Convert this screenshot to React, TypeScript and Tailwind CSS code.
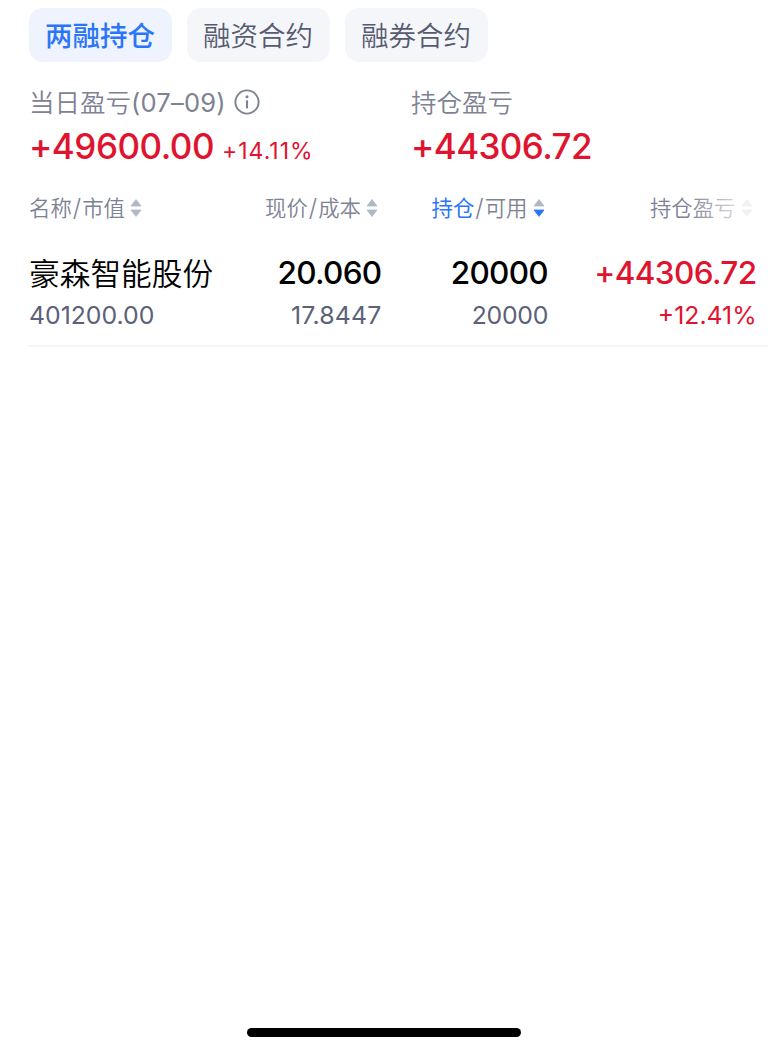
type Tone = "blue" | "gray";

const tabs = [
  { label: "两融持仓", active: true },
  { label: "融资合约", active: false },
  { label: "融券合约", active: false },
];

function SortIcon({ down = "gray" }: { down?: Tone }) {
  return (
    <svg width="12" height="18" viewBox="0 0 12 18" className="shrink-0">
      <path d="M6 0.6 11 7H1Z" fill="#b0b7c5" stroke="#b0b7c5" strokeWidth="0.8" strokeLinejoin="round" />
      <path
        d="M6 17.4 1 11H11Z"
        fill={down === "blue" ? "#2a76f7" : "#b0b7c5"}
        stroke={down === "blue" ? "#2a76f7" : "#b0b7c5"}
        strokeWidth="0.8"
        strokeLinejoin="round"
      />
    </svg>
  );
}

function InfoIcon() {
  return (
    <svg width="26" height="26" viewBox="0 0 26 26" fill="none" className="shrink-0">
      <circle cx="13" cy="13" r="11.6" stroke="#7d8294" strokeWidth="1.9" />
      <circle cx="13" cy="7.8" r="1.5" fill="#7d8294" />
      <path d="M13 11.3V19.4" stroke="#7d8294" strokeWidth="2.1" />
    </svg>
  );
}

function Slash() {
  return <span className="mx-px text-[24px] leading-none">/</span>;
}

export default function App() {
  return (
    <main className="flex h-[1053px] w-[768px] flex-col overflow-hidden whitespace-nowrap bg-white font-['Inter','Noto_Sans_CJK_SC',sans-serif]">
      <nav className="flex gap-[15px] pl-[29px] pt-2">
        {tabs.map((tab) => (
          <button
            key={tab.label}
            type="button"
            className={`flex h-[54px] w-[143px] items-center justify-center rounded-[14px] pr-px pt-1 text-[27.5px] leading-none ${
              tab.active ? "bg-[#eef3fe] font-medium text-[#2a76f7]" : "bg-[#f5f6fa] font-[350] text-[#555b70]"
            }`}
          >
            {tab.label}
          </button>
        ))}
      </nav>

      <section className="flex pl-[29px] pt-[25px]">
        <div className="w-[382px]">
          <div className="flex h-[30px] items-center gap-[8px] text-[25.5px] leading-[30px] text-[#7d8294]">
            <span className="pt-0.5 font-[350]">
              当日盈亏<span className="font-normal tracking-[0.2px]">(07–09)</span>
            </span>
            <InfoIcon />
          </div>
          <div className="flex h-[58px] items-baseline gap-[8px] text-[#df142f]">
            <span className="text-[35px] font-medium leading-[58px] tracking-[-0.5px]">+49600.00</span>
            <span className="text-[23px] tracking-[1px]">+14.11%</span>
          </div>
        </div>
        <div>
          <div className="h-[30px] pt-px text-[25.5px] font-[350] leading-[30px] text-[#7d8294]">持仓盈亏</div>
          <div className="text-[35px] font-medium leading-[58px] tracking-[-0.6px] text-[#df142f]">+44306.72</div>
        </div>
      </section>

      <section className="pl-7">
        <div className="relative flex h-[60px] items-center pt-[5px] text-[21.4px] font-[350] leading-[30px] text-[#7d8294]">
          <div className="flex w-[164px] items-center gap-[5px] pl-px">
            <span>
              名称
              <Slash />
              市值
            </span>
            <SortIcon />
          </div>
          <div className="flex w-[186px] items-center justify-end gap-[5px]">
            <span>
              现价
              <Slash />
              成本
            </span>
            <SortIcon />
          </div>
          <div className="flex w-[166.5px] items-center justify-end gap-[5px]">
            <span>
              <span className="font-normal text-[#2a76f7]">持仓</span>
              <Slash />
              可用
            </span>
            <SortIcon down="blue" />
          </div>
          <div className="flex w-[208px] items-center justify-end gap-[5px]">
            持仓盈亏
            <SortIcon />
          </div>
          <div className="absolute inset-y-0 right-0 w-[80px] bg-linear-to-r from-white/0 to-white/80 to-70%" />
        </div>

        <div className="flex h-[112px] border-b-2 border-[#f4f5fa] pt-[15px] text-[24.8px] leading-[40px] text-[#5b6178]">
          <div className="w-[200px] pl-px">
            <div className="h-[45px] pt-px text-[30.7px] font-[350] leading-[46px] text-black">豪森智能股份</div>
            <div>401200.00</div>
          </div>
          <div className="w-[153.5px] text-right">
            <div className="h-[45px] text-[31.5px] font-medium leading-[46px] tracking-[-0.7px] text-black">20.060</div>
            <div className="tracking-[0.2px]">17.8447</div>
          </div>
          <div className="w-[166.5px] text-right">
            <div className="h-[45px] text-[31.5px] font-medium leading-[46px] tracking-[-0.7px] text-black">20000</div>
            <div className="tracking-[-0.3px]">20000</div>
          </div>
          <div className="w-[208.5px] text-right text-[#df142f]">
            <div className="h-[45px] text-[31.5px] font-medium leading-[46px] tracking-[-0.6px]">+44306.72</div>
            <div>+12.41%</div>
          </div>
        </div>
      </section>

      <div className="mx-auto mb-4 mt-auto h-[9px] w-[274px] rounded-full bg-black" />
    </main>
  );
}
